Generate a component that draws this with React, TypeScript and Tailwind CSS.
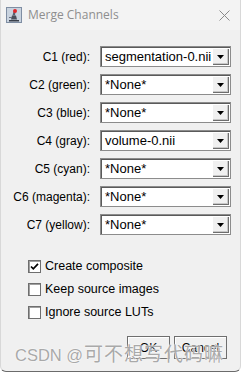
import React from 'react';

const channels = [
  { label: 'C1 (red):', value: 'segmentation-0.nii' },
  { label: 'C2 (green):', value: '*None*' },
  { label: 'C3 (blue):', value: '*None*' },
  { label: 'C4 (gray):', value: 'volume-0.nii' },
  { label: 'C5 (cyan):', value: '*None*' },
  { label: 'C6 (magenta):', value: '*None*' },
  { label: 'C7 (yellow):', value: '*None*' },
];

const options = [
  { label: 'Create composite', checked: true },
  { label: 'Keep source images', checked: false },
  { label: 'Ignore source LUTs', checked: false },
];

const ImageJIcon = () => (
  <svg width="16" height="16" viewBox="0 0 16 16">
    <rect x="0.5" y="0.5" width="15" height="15" fill="#c9d3df" stroke="#7f8ea3" />
    <path d="M3 13h10v1.5H3z" fill="#3a3f4a" />
    <path d="M5 12.5l1-4h4l1 4z" fill="#4a505c" />
    <path d="M6.5 8.5l1-4h2l-0.5 4z" fill="#5a6170" />
    <circle cx="9" cy="4" r="2" fill="#e0262a" />
    <path d="M3 10h3v1H3z" fill="#6a7080" />
  </svg>
);

const Combo = ({ value }: { value: string }) => (
  <div className="flex h-[21px] w-[131px] items-stretch border border-[#8c8c8c] bg-white shadow-[inset_1px_1px_0_#5a5a5a]">
    <div className="flex flex-1 items-center overflow-hidden whitespace-nowrap pl-[4px] text-[13px] leading-none text-black">
      {value}
    </div>
    <div className="my-[1px] mr-[1px] flex w-[17px] items-center justify-center bg-[#f0f0f0] shadow-[inset_1px_1px_0_#ffffff,inset_-1px_-1px_0_#6e6e6e,inset_-2px_-2px_0_#c8c8c8]">
      <svg width="7" height="4" viewBox="0 0 7 4">
        <path d="M0 0h7L3.5 4z" fill="#000" />
      </svg>
    </div>
  </div>
);

const CheckBox = ({ checked }: { checked: boolean }) => (
  <div className="flex h-[13px] w-[13px] items-center justify-center border border-[#6e6e6e] bg-white shadow-[inset_1px_1px_0_#a0a0a0]">
    {checked && (
      <svg width="9" height="9" viewBox="0 0 9 9">
        <path d="M1 4.5l2.3 2.3L8 1.8" fill="none" stroke="#000" strokeWidth="1.7" />
      </svg>
    )}
  </div>
);

export default function App() {
  return (
    <div
      className="relative flex h-[372px] w-[241px] flex-col overflow-hidden rounded-b-[6px] border-b border-l border-r border-b-[#6b6b6b] border-l-[#d8d8d8] border-r-[#d8d8d8] bg-[#f0f0f0]"
      style={{ fontFamily: '"Liberation Sans", Arial, sans-serif' }}
    >
      {/* Title bar */}
      <div className="flex h-[30px] items-center bg-[#f3f3f3] pl-[5px] pr-[8px]">
        <ImageJIcon />
        <span
          className="ml-[6px] text-[12px] text-[#8e8e8e]"
          style={{ fontFamily: '"Open Sans", "Noto Sans", sans-serif' }}
        >
          Merge Channels
        </span>
        <svg className="ml-auto mr-[2px]" width="11" height="11" viewBox="0 0 11 11">
          <path d="M0.5 0.5l10 10M10.5 0.5l-10 10" stroke="#8a8a8a" strokeWidth="1" />
        </svg>
      </div>

      {/* Channel rows */}
      <div className="flex flex-col gap-[7px] pt-[16px]">
        {channels.map((c) => (
          <div key={c.label} className="flex h-[21px] items-center">
            <div className="w-[89px] whitespace-nowrap text-right text-[12px] text-black">{c.label}</div>
            <div className="ml-[10px]">
              <Combo value={c.value} />
            </div>
          </div>
        ))}
      </div>

      {/* Options */}
      <div className="mt-[20px] flex flex-col pl-[27px]">
        {options.map((o) => (
          <div key={o.label} className="flex h-[23px] items-center gap-[4px]">
            <CheckBox checked={o.checked} />
            <span className="text-[12.5px] text-black">{o.label}</span>
          </div>
        ))}
      </div>

      {/* Buttons */}
      <div className="mt-[12px] flex justify-end gap-[4px] pr-[13px]">
        <button className="h-[23px] w-[43px] border border-[#6e6e6e] bg-[#f0f0f0] text-[12px] text-black shadow-[inset_1px_1px_0_#ffffff]">
          OK
        </button>
        <button className="h-[23px] w-[53px] border border-[#6e6e6e] bg-[#f0f0f0] text-[12px] text-black shadow-[inset_1px_1px_0_#ffffff]">
          Cancel
        </button>
      </div>

      {/* Watermark overlay */}
      <div className="pointer-events-none absolute left-[14px] top-[339px] flex items-baseline whitespace-nowrap text-[#a9a9a9] [text-shadow:0_0_1px_#ffffff,0_0_2px_#ffffff]">
        <span className="text-[16.5px]" style={{ fontFamily: '"Liberation Sans", Arial, sans-serif' }}>
          CSDN @
        </span>
        <span className="ml-[1px] text-[19px] tracking-[1px]" style={{ fontFamily: '"Noto Sans CJK SC", sans-serif' }}>
          可不想写代码嘛
        </span>
      </div>
    </div>
  );
}
